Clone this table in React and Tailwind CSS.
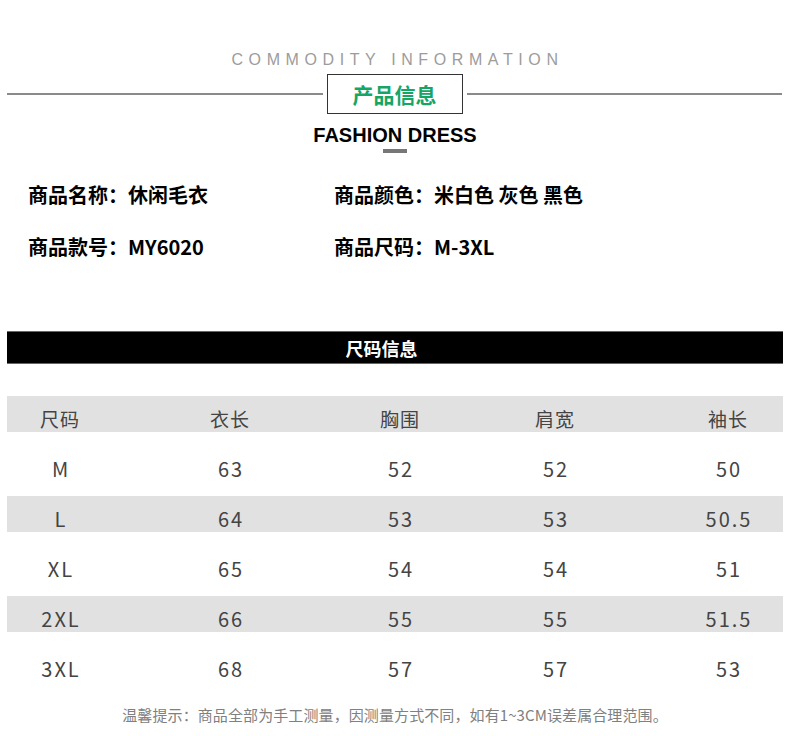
import React from "react";

const rows = [
  ["M", "63", "52", "52", "50"],
  ["L", "64", "53", "53", "50.5"],
  ["XL", "65", "54", "54", "51"],
  ["2XL", "66", "55", "55", "51.5"],
  ["3XL", "68", "57", "57", "53"],
];

function Row({ cells, band, header }) {
  const ml = ["ml-[3px]", "ml-[70px]", "ml-[70px]", "ml-[55px]", "ml-[73px]"];
  return (
    <div className="h-[50px] pt-[2px]">
      <div className={`mx-[7px] h-[36px] flex ${band ? "bg-[#e1e1e1]" : ""}`}>
        {cells.map((c, i) => (
          <div
            key={i}
            className={`${ml[i]} w-[100px] text-center pt-[12px] leading-[22px] text-[#444] ${
              header ? "text-[19px] tracking-[1px]" : "text-[20px] tracking-[2px] pl-[2px]"
            }`}
          >
            {c}
          </div>
        ))}
      </div>
    </div>
  );
}

export default function App() {
  return (
    <div
      className="w-[790px] h-[736px] bg-white overflow-hidden"
      style={{ fontFamily: '"Noto Sans CJK SC", "Noto Sans", sans-serif' }}
    >
      <div className="pt-[50px] flex justify-center">
        <div
          className="text-[16px] leading-[20px] tracking-[5.6px] pl-[5px] text-[#9c9c9c]"
          style={{ fontFamily: '"Liberation Sans", sans-serif' }}
        >
          COMMODITY INFORMATION
        </div>
      </div>
      <div className="mt-[4px] flex items-center h-[40px]">
        <div className="ml-[7px] flex-1 h-[2px] bg-[#8a8a8a]" />
        <div className="mx-[4px] w-[136px] h-[40px] border border-[#333] flex items-center justify-center">
          <span className="text-[21px] font-bold text-[#17a566] leading-none">产品信息</span>
        </div>
        <div className="mr-[8px] flex-1 h-[2px] bg-[#8a8a8a]" />
      </div>
      <div className="mt-[9px] text-center text-[20px] leading-[24px] font-bold text-black" style={{ fontFamily: '"Liberation Sans", sans-serif' }}>
        FASHION DRESS
      </div>
      <div className="mt-[2px] mx-auto w-[24px] h-[4px] bg-[#777]" />

      <div className="mt-[28px] flex text-[20px] leading-[28px] font-bold text-black">
        <div className="ml-[28px] w-[306px]">商品名称：休闲毛衣</div>
        <div>商品颜色：米白色 灰色 黑色</div>
      </div>
      <div className="mt-[24px] flex text-[20px] leading-[28px] font-bold text-black">
        <div className="ml-[28px] w-[306px]">商品款号：MY6020</div>
        <div>商品尺码：M-3XL</div>
      </div>

      <div className="mt-[70px] mx-[7px] h-[33px] bg-black border-y border-[#666] flex items-center justify-center pr-[27px]">
        <span className="text-white text-[18px] font-bold leading-none">尺码信息</span>
      </div>

      <div className="mt-[30px]">
        <Row cells={["尺码", "衣长", "胸围", "肩宽", "袖长"]} band header />
        {rows.map((r, i) => (
          <Row key={i} cells={r} band={i % 2 === 1} />
        ))}
      </div>

      <div className="mt-[11px] text-center text-[15px] leading-[20px] tracking-[0.1px] text-[#808080]">
        温馨提示：商品全部为手工测量，因测量方式不同，如有1~3CM误差属合理范围。
      </div>
    </div>
  );
}
